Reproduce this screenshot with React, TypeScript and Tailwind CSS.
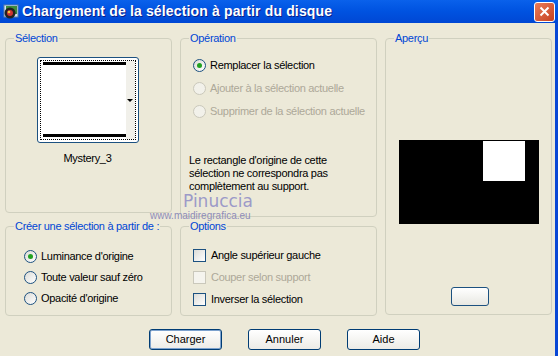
import React from 'react';

const font = { fontFamily: '"Liberation Sans", Arial, sans-serif' };

const Radio: React.FC<{ checked?: boolean; disabled?: boolean; label: string }> = ({ checked, disabled, label }) => (
  <div className="flex items-center gap-[4px] h-[13px]">
    <span
      className={`w-[13px] h-[13px] rounded-full border flex items-center justify-center shrink-0 ${
        disabled
          ? 'border-[#CAC8BB] bg-[#F2F1EA]'
          : 'border-[#1C5180] bg-gradient-to-br from-[#DCDCD7] to-white'
      }`}
    >
      {checked && <span className="w-[5px] h-[5px] rounded-full bg-[#21A121]" />}
    </span>
    <span className={`whitespace-nowrap text-[11px] leading-[13px] tracking-[-0.3px] ${disabled ? 'text-[#ACA899]' : 'text-black'}`}>
      {label}
    </span>
  </div>
);

const Check: React.FC<{ disabled?: boolean; label: string }> = ({ disabled, label }) => (
  <div className="flex items-center gap-[5px] h-[13px]">
    <span
      className={`w-[13px] h-[13px] border shrink-0 ${
        disabled ? 'border-[#CAC8BB] bg-[#F5F4EE]' : 'border-[#1C5180] bg-gradient-to-br from-[#DCDCD7] to-white'
      }`}
    />
    <span className={`whitespace-nowrap text-[11px] leading-[13px] tracking-[-0.3px] ${disabled ? 'text-[#ACA899]' : 'text-black'}`}>
      {label}
    </span>
  </div>
);

const Group: React.FC<{ title: string; className: string; children?: React.ReactNode }> = ({ title, className, children }) => (
  <fieldset className={`border border-[#D0D0BF] rounded-[4px] px-[8px] ${className}`}>
    <legend className="px-[1px] whitespace-nowrap text-[11px] leading-[13px] tracking-[-0.3px] text-[#0046D5]">{title}</legend>
    {children}
  </fieldset>
);

const Button: React.FC<{ label: string; primary?: boolean }> = ({ label, primary }) => (
  <button
    className={`w-[73px] h-[21px] rounded-[3px] border text-[11px] text-black bg-gradient-to-b from-white to-[#ECEBE6] border-[#003C74] ${
      primary ? 'shadow-[inset_0_0_0_1px_#7DA2CE]' : ''
    }`}
  >
    {label}
  </button>
);

export default function App() {
  return (
    <div className="w-[558px] h-[356px] bg-[#ECE9D8] flex flex-col overflow-hidden relative" style={font}>
      {/* title bar */}
      <div className="h-[23px] shrink-0 flex items-center bg-gradient-to-b from-[#0A61EB] via-[#0052E0] to-[#0047D4] pl-[3px] pr-[3px]">
        <svg width="16" height="16" viewBox="0 0 16 16" className="shrink-0">
          <rect x="1" y="1" width="14" height="12" fill="#D8E4F0" stroke="#5B7FA8" />
          <rect x="3" y="2" width="11" height="8" fill="#3C8A3C" />
          <circle cx="7" cy="9" r="5.5" fill="#222" />
          <circle cx="7" cy="9" r="3" fill="#C33" />
          <circle cx="6" cy="8" r="1.3" fill="#F3C43A" />
        </svg>
        <span className="ml-[3px] text-white font-bold text-[14px] tracking-[0.15px] [text-shadow:1px_1px_0_#0A1E8A]">
          Chargement de la sélection à partir du disque
        </span>
        <div className="ml-auto w-[21px] h-[20px] rounded-[3px] border border-white bg-gradient-to-br from-[#E97B59] to-[#C6401E] flex items-center justify-center">
          <svg width="11" height="11" viewBox="0 0 11 11">
            <path d="M1.5 1.5 L9.5 9.5 M9.5 1.5 L1.5 9.5" stroke="white" strokeWidth="2" />
          </svg>
        </div>
      </div>

      {/* body */}
      <div className="flex-1 flex flex-col border-r-[3px] border-[#0847D5] pl-[5px] pt-[9px]">
        <div className="flex gap-[8px]">
          <div className="flex flex-col gap-[7px] w-[167px]">
            <Group title="Sélection" className="h-[181px]">
              <div className="flex flex-col items-center pt-[12px] pr-[2px]">
                <div className="w-[102px] h-[86px] border border-[#1C5180] rounded-[3px] bg-white p-[2px]">
                  <div className="w-full h-full border border-dotted border-black flex">
                    <div className="flex-1 flex flex-col justify-between">
                      <div className="h-[3px] bg-black mt-[1px] ml-[2px]" />
                      <div className="h-[3px] bg-black mb-[2px] ml-[2px]" />
                    </div>
                    <div className="w-[9px] bg-[#F1F0EA] flex items-center justify-center">
                      <span className="w-0 h-0 border-l-[3px] border-r-[3px] border-t-[3px] border-l-transparent border-r-transparent border-t-black" />
                    </div>
                  </div>
                </div>
                <span className="mt-[9px] text-[11px] leading-[13px] tracking-[-0.3px] text-black">Mystery_3</span>
              </div>
            </Group>
            <Group title="Créer une sélection à partir de :" className="h-[96px]">
              <div className="flex flex-col gap-[8px] pt-[17px] pl-[10px]">
                <Radio checked label="Luminance d'origine" />
                <Radio label="Toute valeur sauf zéro" />
                <Radio label="Opacité d'origine" />
              </div>
            </Group>
          </div>

          <div className="flex flex-col gap-[3px] w-[197px]">
            <Group title="Opération" className="h-[185px]">
              <div className="flex flex-col gap-[10px] pt-[14px] pl-[4px]">
                <Radio checked label="Remplacer la sélection" />
                <Radio disabled label="Ajouter à la sélection actuelle" />
                <Radio disabled label="Supprimer de la sélection actuelle" />
              </div>
              <p className="mt-[36px] text-[11px] leading-[13px] tracking-[-0.3px] text-black pr-[8px]">
                Le rectangle d'origine de cette sélection ne correspondra pas complètement au support.
              </p>
            </Group>
            <Group title="Options" className="h-[96px]">
              <div className="flex flex-col gap-[9px] pt-[16px] pl-[4px]">
                <Check label="Angle supérieur gauche" />
                <Check disabled label="Couper selon support" />
                <Check label="Inverser la sélection" />
              </div>
            </Group>
          </div>

          <Group title="Aperçu" className="w-[167px] h-[283px]">
            <div className="flex flex-col items-center pt-[95px]">
              <div className="w-[140px] h-[84px] bg-black flex justify-end items-start pr-[14px] pt-[1px]">
                <div className="w-[42px] h-[40px] bg-white" />
              </div>
              <div className="mt-[63px] ml-[2px] w-[38px] h-[19px] rounded-[3px] border border-[#1C5180] bg-gradient-to-b from-white to-[#E8E8E2]" />
            </div>
          </Group>
        </div>

        <div className="flex gap-[26px] pl-[144px] mt-[13px]">
          <Button label="Charger" primary />
          <Button label="Annuler" />
          <Button label="Aide" />
        </div>
      </div>

      {/* watermark */}
      <div className="absolute left-[150px] top-[193px] flex flex-col items-start pointer-events-none">
        <span className="pl-[33px] text-[17px] leading-[17px] text-[#9C9AC8]" style={{ fontFamily: '"DejaVu Sans", sans-serif' }}>
          Pinuccia
        </span>
        <span className="text-[10px] leading-[11px] text-[#8E8CB8]">www.maidiregrafica.eu</span>
      </div>
    </div>
  );
}
